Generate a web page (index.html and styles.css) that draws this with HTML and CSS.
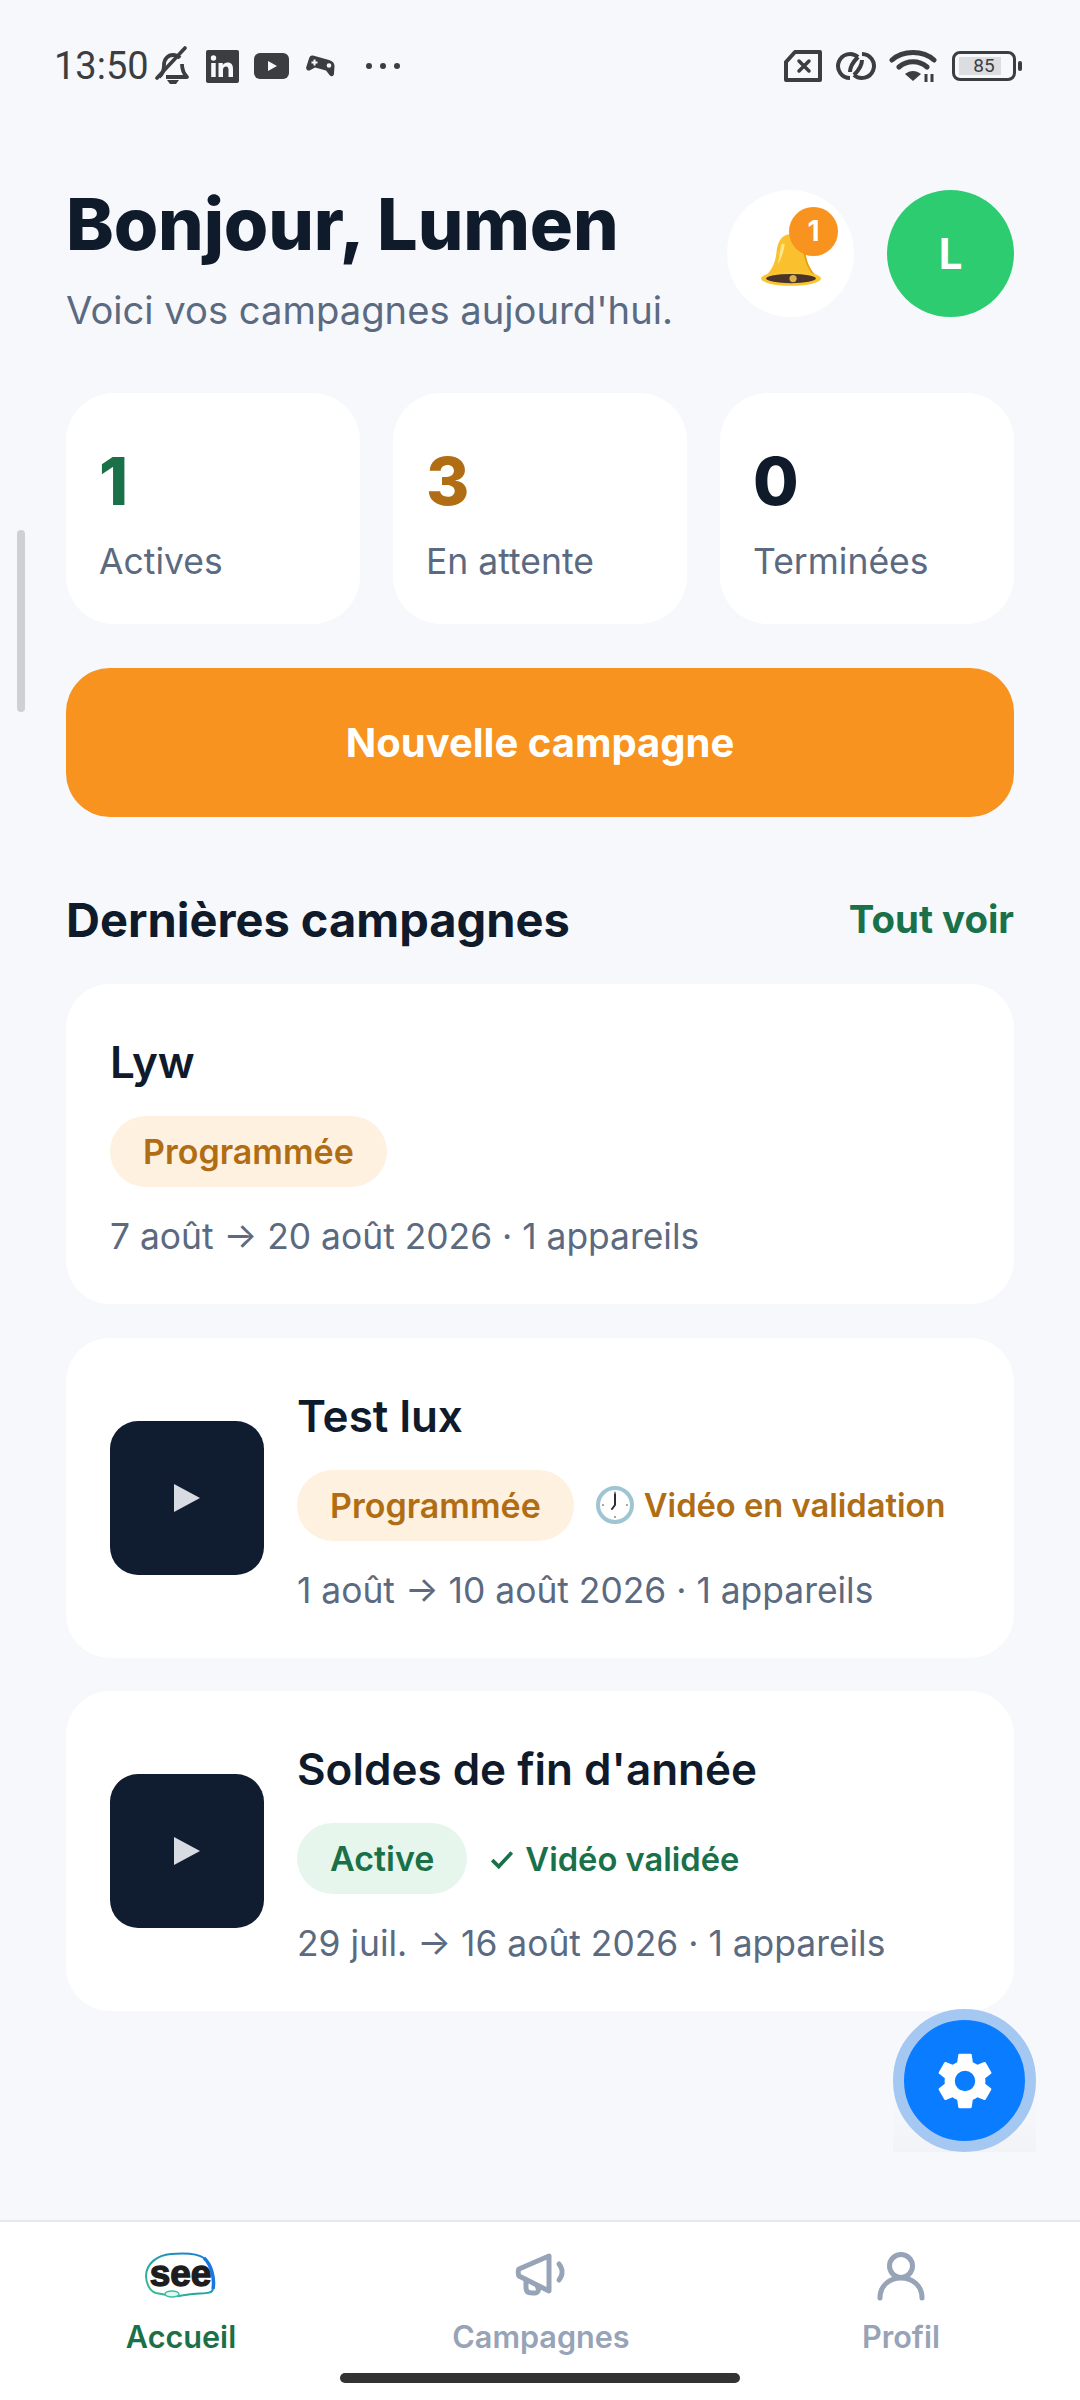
FILE: index.html
```html
<!DOCTYPE html>
<html lang="fr">
<head>
<meta charset="UTF-8">
<title>Accueil</title>
<link rel="stylesheet" href="styles.css">
</head>
<body>
<div class="screen">
  <div class="statusbar">
    <div class="status-left">
      <span class="time">13:50</span>
      <svg class="ico-bell-off" viewBox="0 0 36 40" width="36" height="40"><path d="M4 31c4-3 5-7 5-12 0-6 4-10 9-10 3 0 5 1 7 3M27 18c0 5 1 9 5 13H11" fill="none" stroke="#3c3d40" stroke-width="3.800" stroke-linejoin="round"/><path d="M12 34h12l-3 4h-6z" fill="#3c3d40"/><path d="M2 32 30 2" stroke="#3c3d40" stroke-width="3.600" stroke-linecap="round"/></svg>
      <svg class="ico-in" viewBox="0 0 33 33" width="33" height="33"><rect width="33" height="33" rx="2" fill="#3c3d40"/><circle cx="7.500" cy="8" r="2.700" fill="#f6f8fc"/><path d="M5.200 13h4.500v14H5.200zM12.500 13h4.300v2c1-1.500 2.600-2.400 4.700-2.400 4 0 5.500 2.500 5.500 6.400v8h-4.500v-7.200c0-2-.6-3.300-2.400-3.300-2 0-3.100 1.300-3.100 3.400V27h-4.500z" fill="#f6f8fc"/></svg>
      <svg class="ico-yt" viewBox="0 0 35 26" width="35" height="26"><rect width="35" height="26" rx="6" fill="#3c3d40"/><path d="M14 8v10l9-5z" fill="#f6f8fc"/></svg>
      <svg class="ico-pad" viewBox="0 0 29 22" width="29" height="22"><path d="M7 .5 23 5c3.500 1 5.500 3 5.500 6l-.5 7.500c0 3-3 3.500-4.500 1.500L20 15.500 9 12.500l-4.500 2.500c-2.500 1.500-5-.5-4.200-3L3 3.500C3.800 1 5 0 7 .5z" fill="#3c3d40"/><path d="M7.500 4.500h2v2h2v2h-2v2h-2v-2h-2v-2h2z" fill="#f6f8fc"/><circle cx="23" cy="10.500" r="2.300" fill="#f6f8fc"/></svg>
      <span class="dots"><i></i><i></i><i></i></span>
    </div>
    <div class="status-right">
      <svg viewBox="0 0 40 32" width="40" height="32"><path d="M12 2h25v28H3V12z" fill="none" stroke="#3c3d40" stroke-width="4" stroke-linejoin="round"/><path d="m16 11 10 10M26 11 16 21" stroke="#3c3d40" stroke-width="3.500" stroke-linecap="round"/></svg>
      <svg viewBox="0 0 42 30" width="42" height="30"><path d="M23 6A12 12 0 1 0 15 27" fill="none" stroke="#3c3d40" stroke-width="4"/><path d="M19 24A12 12 0 1 0 27 3" fill="none" stroke="#3c3d40" stroke-width="4"/><path d="M15 21c0-6 4-11 8-15M27 9c0 6-4 11-8 15" fill="none" stroke="#3c3d40" stroke-width="4"/></svg>
      <svg viewBox="0 0 48 34" width="48" height="34"><path d="M3 11c11-10 31-10 42 0M10 18c8-7 20-7 28 0" fill="none" stroke="#3c3d40" stroke-width="5" stroke-linecap="round"/><path d="M16 25c5-4 11-4 16 0l-8 7z" fill="#3c3d40"/><path d="M37 25v8M43 25v8" stroke="#3c3d40" stroke-width="3"/></svg>
      <div class="battery">
        <div class="battery-body"><span class="battery-level">85</span></div>
        <div class="battery-tip"></div>
      </div>
    </div>
  </div>

  <div class="scrollbar"></div>

  <main class="content">
    <header class="top">
      <div class="hello">
        <h1>Bonjour, Lumen</h1>
        <p>Voici vos campagnes aujourd'hui.</p>
      </div>
      <div class="top-actions">
        <div class="round-btn bell-btn">
          <svg viewBox="0 0 62 56" width="64" height="58">
            <path d="M31 3c-9 0-13 7-14 17-1 11-5 19-13 26 9 5 45 5 54 0-8-7-12-15-13-26C44 10 40 3 31 3z" fill="#fbc02d"/>
            <path d="M22 12c-2 6-2 14-4 20 4-5 6-13 7-19z" fill="#fde58a"/>
            <path d="M40 10c4 8 2 22 14 34l4 2c-8-7-12-15-13-26-.5-4-2-8-5-10z" fill="#e79e16"/>
            <ellipse cx="31" cy="46" rx="29" ry="7" fill="#fbc531"/>
            <ellipse cx="31" cy="46" rx="24" ry="4.500" fill="#4a3328"/>
            <circle cx="33" cy="46" r="3.500" fill="#d9b04a"/>
          </svg>
          <span class="bell-count">1</span>
        </div>
        <div class="round-btn avatar">L</div>
      </div>
    </header>

    <section class="stats">
      <div class="stat"><div class="stat-num green">1</div><div class="stat-label">Actives</div></div>
      <div class="stat"><div class="stat-num amber">3</div><div class="stat-label">En attente</div></div>
      <div class="stat"><div class="stat-num">0</div><div class="stat-label">Terminées</div></div>
    </section>

    <button class="new-btn">Nouvelle campagne</button>

    <div class="section-head">
      <h2>Dernières campagnes</h2>
      <a class="see-all">Tout voir</a>
    </div>

    <div class="card">
      <div class="card-body">
        <div class="card-name">Lyw</div>
        <div class="card-tags"><span class="pill pill-orange">Programmée</span></div>
        <div class="card-meta">7 août → 20 août 2026 · 1 appareils</div>
      </div>
    </div>

    <div class="card">
      <div class="thumb"><span class="play"></span></div>
      <div class="card-body">
        <div class="card-name">Test lux</div>
        <div class="card-tags">
          <span class="pill pill-orange">Programmée</span>
          <span class="video-state amber">
            <svg viewBox="0 0 38 38" width="38" height="38"><circle cx="19" cy="19" r="17" fill="#fff" stroke="#9fc5d3" stroke-width="4"/><path d="M19 19V8M19 19l-3 4" stroke="#2d2d33" stroke-width="2" stroke-linecap="round"/><circle cx="19" cy="6.500" r="1" fill="#8a8a8a"/><circle cx="31" cy="19" r="1" fill="#8a8a8a"/><circle cx="19" cy="31" r="1" fill="#8a8a8a"/><circle cx="7" cy="19" r="1" fill="#8a8a8a"/></svg>
            Vidéo en validation
          </span>
        </div>
        <div class="card-meta">1 août → 10 août 2026 · 1 appareils</div>
      </div>
    </div>

    <div class="card">
      <div class="thumb"><span class="play"></span></div>
      <div class="card-body">
        <div class="card-name">Soldes de fin d'année</div>
        <div class="card-tags">
          <span class="pill pill-green">Active</span>
          <span class="video-state green">
            <svg viewBox="0 0 24 24" width="26" height="26"><path d="m3 13 6 6L21 6" fill="none" stroke="#1a7048" stroke-width="3.400"/></svg>
            Vidéo validée
          </span>
        </div>
        <div class="card-meta">29 juil. → 16 août 2026 · 1 appareils</div>
      </div>
    </div>
  </main>

  <div class="fab-wrap">
    <div class="fab">
      <svg viewBox="0 0 24 24" width="68" height="68"><path fill="#fff" d="M19.140 12.940c.04-.3.060-.61.060-.94 0-.32-.02-.64-.07-.94l2.030-1.580a.49.49 0 0 0 .12-.61l-1.920-3.320a.49.49 0 0 0-.59-.22l-2.390.96c-.5-.38-1.030-.7-1.620-.94l-.36-2.540a.48.48 0 0 0-.48-.41h-3.840a.48.48 0 0 0-.47.41l-.36 2.540c-.59.24-1.130.57-1.620.94l-2.390-.96a.48.48 0 0 0-.59.22L2.740 8.870a.48.48 0 0 0 .12.61l2.030 1.580c-.05.3-.09.63-.09.94s.02.64.07.94l-2.030 1.580a.49.49 0 0 0-.12.61l1.920 3.320c.12.22.37.29.59.22l2.390-.96c.5.38 1.030.7 1.620.94l.36 2.540c.05.24.24.41.48.41h3.840c.24 0 .44-.17.47-.41l.36-2.540c.59-.24 1.130-.56 1.620-.94l2.390.96c.22.080.47 0 .59-.22l1.920-3.320a.48.48 0 0 0-.12-.61zM12 15.600a3.600 3.600 0 1 1 0-7.200 3.600 3.600 0 0 1 0 7.200z"/></svg>
    </div>
  </div>

  <nav class="tabbar">
    <div class="tab tab-on">
      <svg viewBox="0 0 72 46" width="72" height="46">
        <defs><linearGradient id="ring" x1="0" x2="1" y1="1" y2="0"><stop offset="0" stop-color="#3cc08f"/><stop offset=".5" stop-color="#1f9fa8"/><stop offset="1" stop-color="#1877e0"/></linearGradient></defs>
        <path d="M26 2c12-1 26-1 33 4 7 6 11 20 9 31-1 5-8 4-20 5-5 .5-8 1-14 2-8 0-14-1-23-3C4 39 1 30 1 24 1 12 12 3 26 2z" fill="#fff" stroke="url(#ring)" stroke-width="2"/>
        <path d="M59 6c7 6 11 20 9 31" fill="none" stroke="#1877e0" stroke-width="3.500"/>
        <ellipse cx="27" cy="42" rx="7" ry="3" fill="#e4f6f1" stroke="#3cc0a0" stroke-width="1.500"/>
        <text x="35.500" y="34" text-anchor="middle" class="logo-text">see</text>
      </svg>
      <span>Accueil</span>
    </div>
    <div class="tab">
      <svg viewBox="0 0 52 46" width="52" height="46"><path d="M34 4 4 17c-1 .5-1 6 0 7l30 15z" fill="none" stroke="#97a3b6" stroke-width="5" stroke-linejoin="round"/><path d="M11 26v10c0 4 3 5 6 5h3c3 0 4-3 3-5l-1-3" fill="none" stroke="#97a3b6" stroke-width="5"/><path d="M44 12c4 5 4 11 0 16" fill="none" stroke="#97a3b6" stroke-width="5" stroke-linecap="round"/></svg>
      <span>Campagnes</span>
    </div>
    <div class="tab">
      <svg viewBox="0 0 50 50" width="50" height="50"><circle cx="25" cy="14" r="11.500" fill="none" stroke="#97a3b6" stroke-width="5"/><path d="M4 46c0-12 9-20 21-20s21 8 21 20" fill="none" stroke="#97a3b6" stroke-width="5" stroke-linecap="round"/></svg>
      <span>Profil</span>
    </div>
  </nav>
  <div class="home-bar"></div>
</div>
</body>
</html>
```

FILE: styles.css
```css
* {
  box-sizing: border-box;
}

html, body {
  margin: 0;
  padding: 0;
}

body {
  font-family: Inter, "Liberation Sans", sans-serif;
  background: #f6f8fc;
  color: #0f1a2b;
}

.screen {
  position: relative;
  width: 1080px;
  height: 2400px;
  overflow: hidden;
  display: flex;
  flex-direction: column;
  background: #f6f8fc;
}

/* status bar */
.statusbar {
  height: 132px;
  padding: 46px 58px 0 54px;
  display: flex;
  justify-content: space-between;
  align-items: flex-start;
  flex-shrink: 0;
}

.status-left, .status-right {
  display: flex;
  align-items: center;
  height: 40px;
}

.time {
  font-family: Roboto, sans-serif;
  font-size: 38px;
  color: #3c3d40;
  margin-right: 6px;
}

.ico-in {
  margin-left: 15px;
}

.ico-yt {
  margin-left: 15px;
}

.ico-pad {
  margin-left: 17px;
}

.dots {
  display: flex;
  gap: 8px;
  margin-left: 31px;
}

.dots i {
  width: 6px;
  height: 6px;
  border-radius: 50%;
  background: #3c3d40;
}

.status-right {
  gap: 12px;
}

.battery {
  display: flex;
  align-items: center;
  margin-left: 3px;
}

.battery-body {
  width: 64px;
  height: 30px;
  border: 3px solid #3c3d40;
  border-radius: 8px;
  padding: 3px 0 0 4px;
}

.battery-level {
  display: block;
  width: 42px;
  height: 18px;
  background: #dcdde0;
  font-family: Roboto, sans-serif;
  font-size: 19px;
  line-height: 18px;
  color: #3c3d40;
  text-align: center;
  padding-left: 8px;
}

.battery-tip {
  width: 4px;
  height: 10px;
  margin-left: 2px;
  border-radius: 2px;
  background: #3c3d40;
}

.scrollbar {
  position: absolute;
  left: 17px;
  top: 530px;
  width: 8px;
  height: 182px;
  border-radius: 4px;
  background: #cfd0d3;
}

/* main column */
.content {
  flex: 1;
  padding: 0 66px;
}

.top {
  display: flex;
  justify-content: space-between;
  height: 261px;
}

.hello h1 {
  margin: 48px 0 0;
  font-size: 72px;
  font-weight: 800;
  line-height: 88px;
  color: #0f1a2b;
  letter-spacing: -.17px;
}

.hello p {
  margin: 17px 0 0;
  font-size: 38.200px;
  line-height: 50px;
  color: #5b6a80;
}

.top-actions {
  display: flex;
  gap: 33px;
  padding-top: 58px;
}

.round-btn {
  position: relative;
  width: 127px;
  height: 127px;
  border-radius: 50%;
  display: flex;
  align-items: center;
  justify-content: center;
}

.bell-btn {
  background: #fff;
}

.bell-btn svg {
  margin-top: 12px;
}

.bell-count {
  position: absolute;
  top: 17px;
  left: 62px;
  width: 49px;
  height: 49px;
  border-radius: 50%;
  background: #f7931e;
  color: #fff;
  font-size: 28px;
  font-weight: 700;
  line-height: 49px;
  text-align: center;
}

.avatar {
  background: #2ecc71;
  color: #fff;
  font-size: 42px;
  font-weight: 700;
}

.stats {
  display: flex;
  gap: 33px;
}

.stat {
  flex: 1;
  height: 231px;
  padding: 49px 33px 0;
  background: #fff;
  border-radius: 48px;
}

.stat-num {
  font-size: 66px;
  font-weight: 800;
  line-height: 78px;
}

.stat-label {
  margin-top: 19px;
  font-size: 35.500px;
  line-height: 46px;
  color: #5b6a80;
}

.green {
  color: #1a7048;
}

.amber {
  color: #b06d14;
}

.new-btn {
  display: block;
  width: 100%;
  height: 149px;
  margin-top: 44px;
  border: none;
  border-radius: 44px;
  background: #f7931e;
  color: #fff;
  font-family: inherit;
  font-size: 40px;
  font-weight: 700;
}

.section-head {
  display: flex;
  justify-content: space-between;
  align-items: center;
  margin-top: 70px;
  height: 64px;
  margin-bottom: 33px;
}

.section-head h2 {
  margin: 0;
  font-size: 47px;
  font-weight: 700;
  color: #0f1a2b;
}

.see-all {
  font-size: 38.400px;
  font-weight: 700;
  color: #1a7048;
}

/* campaign cards */
.card {
  display: flex;
  align-items: center;
  gap: 33px;
  height: 320px;
  margin-bottom: 33.500px;
  padding: 0 44px;
  background: #fff;
  border-radius: 44px;
}

.card-body {
  padding-top: 7px;
}

.thumb {
  flex-shrink: 0;
  width: 154px;
  height: 154px;
  border-radius: 28px;
  background: #101c30;
  display: flex;
  align-items: center;
  justify-content: center;
}

.play {
  width: 0;
  height: 0;
  border-left: 26px solid #d9dbe2;
  border-top: 14px solid transparent;
  border-bottom: 14px solid transparent;
}

.card-name {
  font-size: 44px;
  font-weight: 600;
  line-height: 54px;
  color: #0f1a2b;
}

.card-tags {
  display: flex;
  align-items: center;
  gap: 22px;
  margin-top: 27px;
}

.pill {
  height: 71px;
  padding: 0 33px;
  border-radius: 36px;
  font-size: 34px;
  font-weight: 600;
  line-height: 71px;
  white-space: nowrap;
}

.pill-orange {
  background: #fef1e0;
  color: #b06d14;
}

.pill-green {
  background: #e6f6ed;
  color: #1a7048;
}

.video-state {
  display: flex;
  align-items: center;
  gap: 10px;
  font-size: 32.700px;
  font-weight: 600;
  white-space: nowrap;
}

.card-meta {
  margin-top: 27px;
  font-size: 35.400px;
  line-height: 46px;
  color: #5b6a80;
}

/* floating settings button, its shadow is cut off by a square in the reference */
.fab-wrap {
  position: absolute;
  left: 893px;
  top: 2009px;
  width: 143px;
  height: 143px;
  background: linear-gradient(to bottom, rgba(0, 0, 0, 0) 60%, rgba(0, 0, 0, .02) 100%);
  border-radius: 50% 50% 0 0;
}

.fab {
  width: 143px;
  height: 143px;
  border-radius: 50%;
  background: #0a7cff;
  border: 11px solid #a5c8f3;
  display: flex;
  align-items: center;
  justify-content: center;
}

/* bottom nav */
.tabbar {
  height: 180px;
  flex-shrink: 0;
  display: flex;
  justify-content: space-between;
  padding: 0 66px;
  background: #fff;
  border-top: 2px solid #e6e8ec;
}

.tab {
  width: 280px;
  display: flex;
  flex-direction: column;
  align-items: center;
  height: 132.500px;
  padding-top: 30px;
  justify-content: space-between;
  font-size: 30.600px;
  font-weight: 600;
  color: #97a3b6;
}

.tab-on {
  color: #1a7048;
  margin-left: -25px;
}

.tab:last-child {
  margin-right: -27px;
}

.logo-text {
  font-family: "Liberation Sans", sans-serif;
  font-size: 37px;
  font-weight: 700;
  fill: #1d1d1f;
  stroke: #1d1d1f;
  stroke-width: 1.400px;
}

.home-bar {
  position: absolute;
  left: 340px;
  top: 2373px;
  width: 400px;
  height: 10px;
  border-radius: 5px;
  background: #333;
}
```
